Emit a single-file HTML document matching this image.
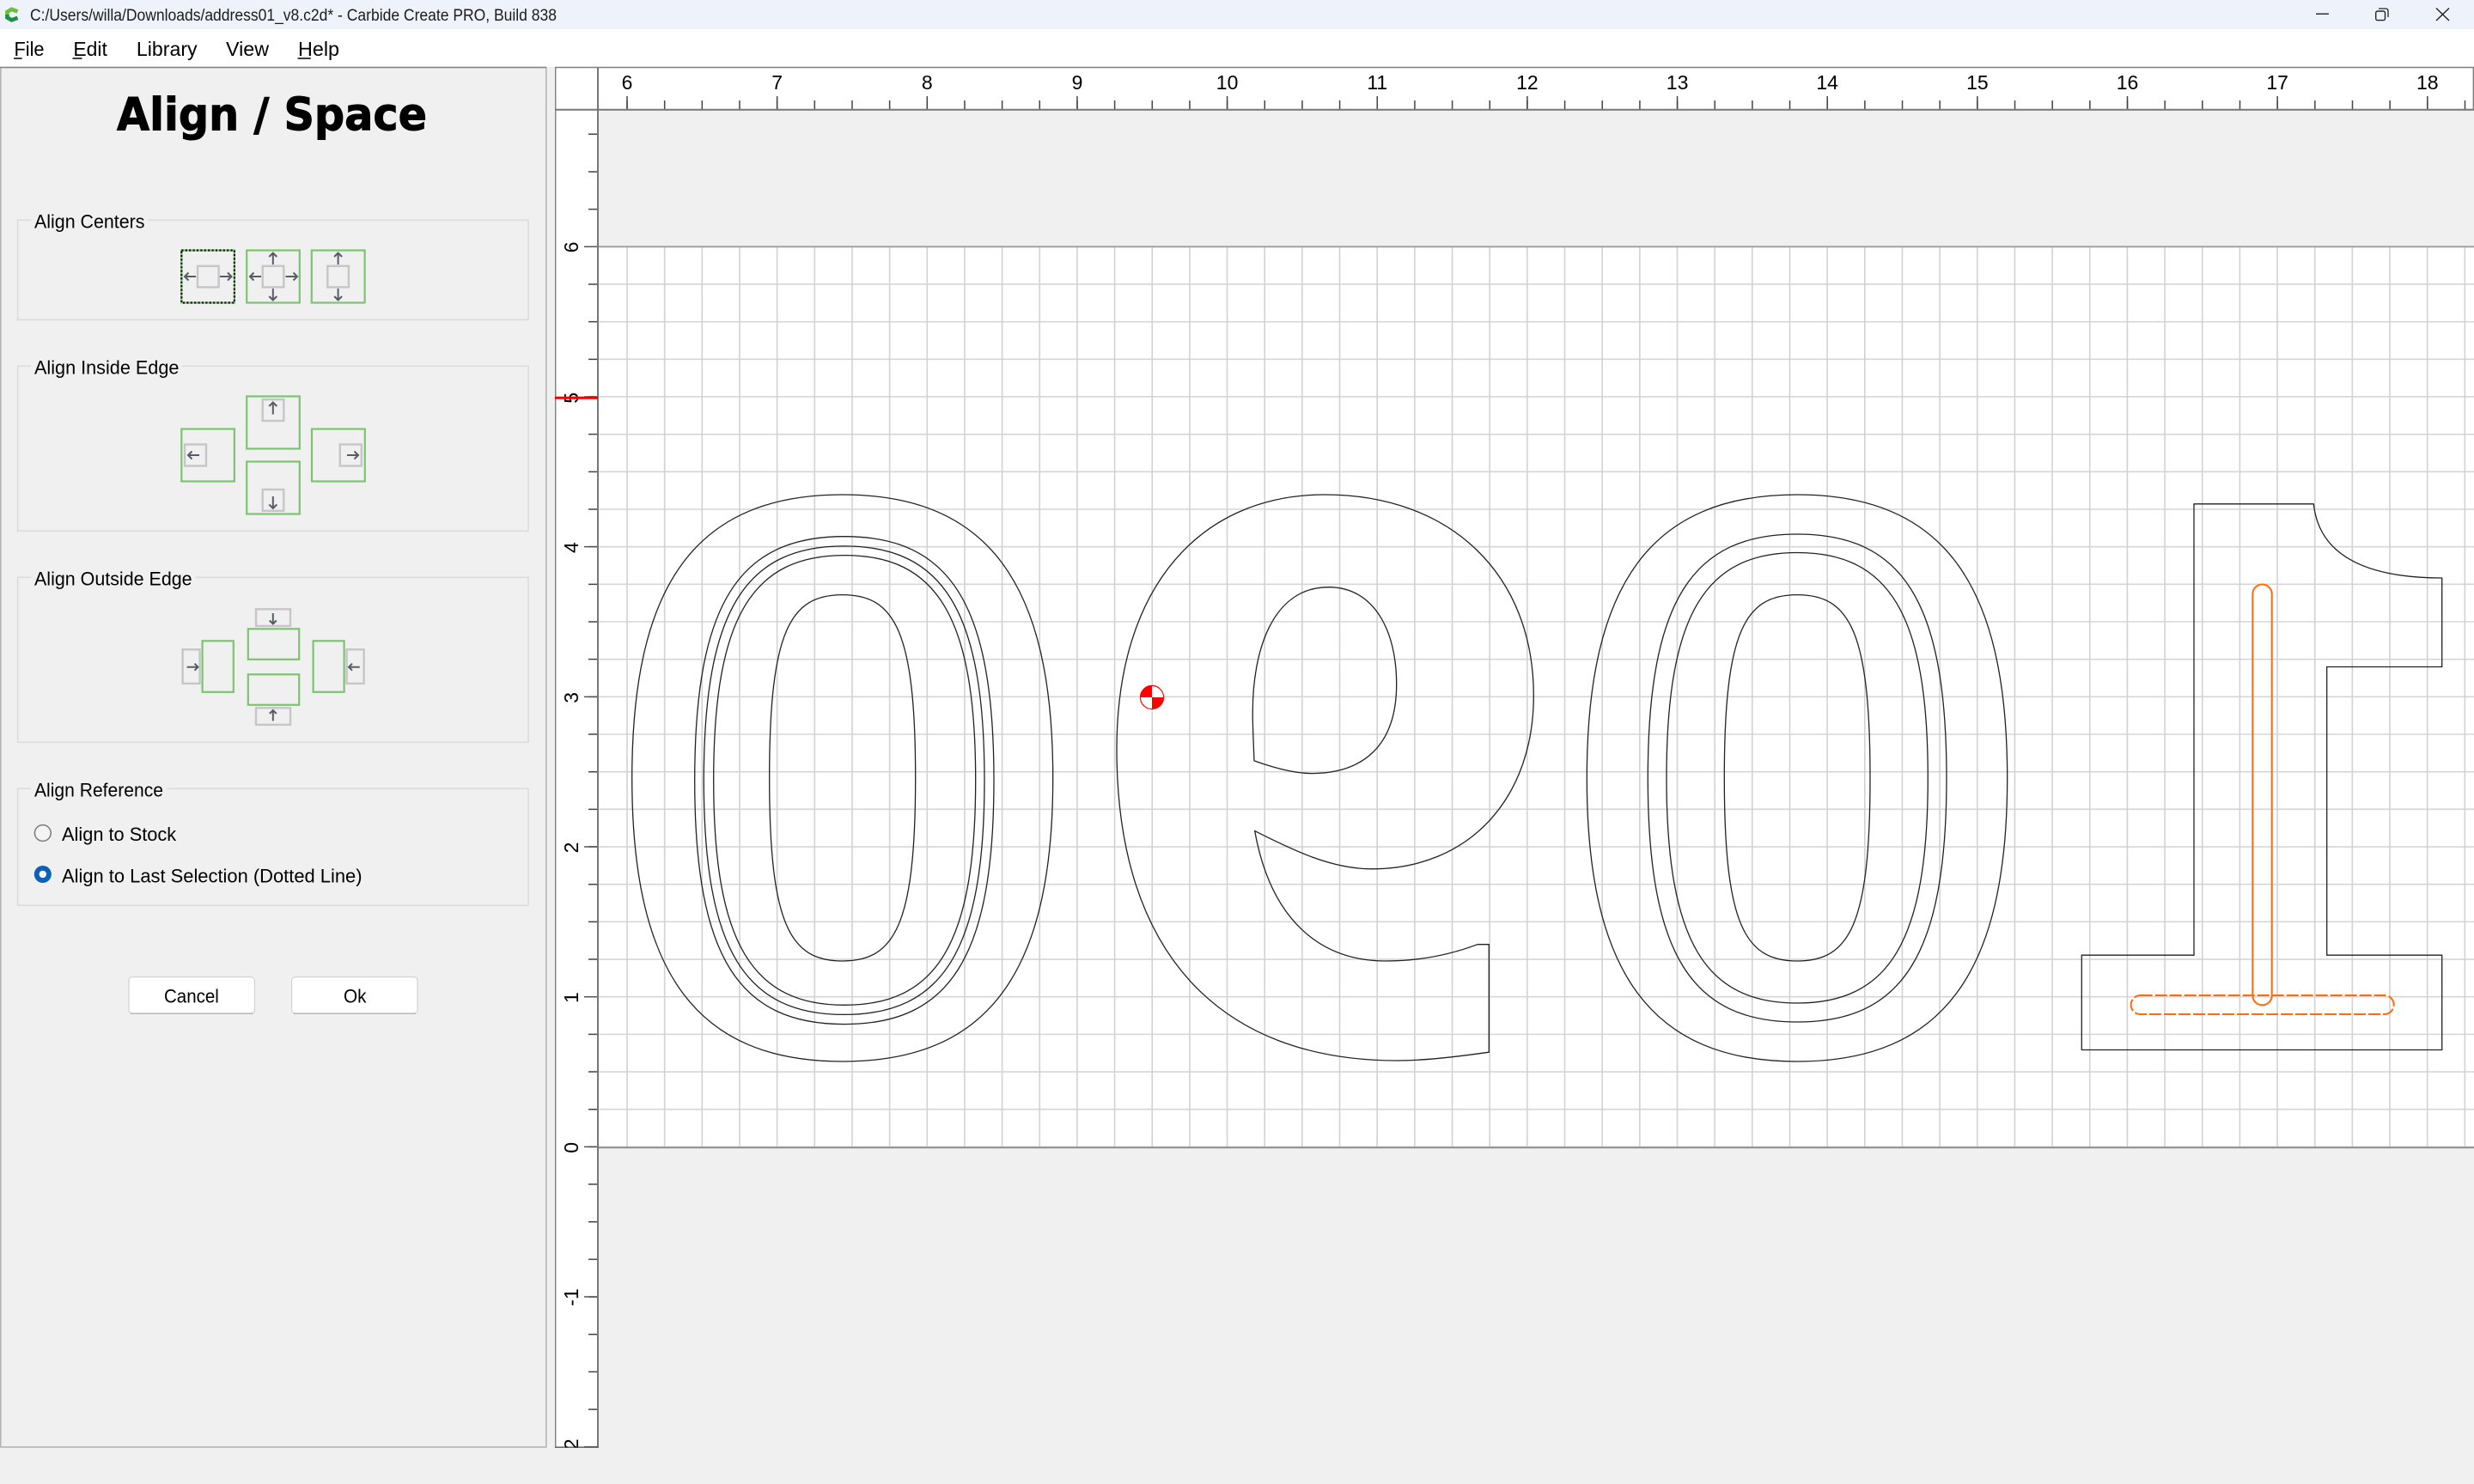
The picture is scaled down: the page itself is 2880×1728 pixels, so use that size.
<!DOCTYPE html>
<html><head><meta charset="utf-8"><title>Carbide Create PRO</title>
<style>
html,body{margin:0;padding:0;width:2880px;height:1728px;overflow:hidden;background:#f0f0f0}
svg{display:block}
text{font-family:"Liberation Sans",sans-serif;fill:#000}
.lb{font-size:22px}
.rn{font-size:23px;text-anchor:middle}
.g{fill:none;stroke:#7cc46f;stroke-width:2.2}
.s{fill:none;stroke:#c6c6c6;stroke-width:2.4}
.a{fill:none;stroke:#545d66;stroke-width:2}
.c{fill:none;stroke:#222;stroke-width:1.3}
.o{fill:none;stroke:#ff6a0a;stroke-width:2}
</style></head><body>
<svg xmlns="http://www.w3.org/2000/svg" width="2880" height="1728" viewBox="0 0 2880 1728">
<defs><clipPath id="vr"><rect x="646" y="128" width="50" height="1557.5"/></clipPath></defs>
<rect width="2880" height="1728" fill="#f0f0f0"/>
<!-- title bar -->
<rect width="2880" height="34" fill="#eef2fa"/>
<path d="M20.5 13.4L13.5 10.8L8.4 13.8V17.5" fill="none" stroke="#6cbf3c" stroke-width="4.6"/>
<path d="M8.4 17V20.4L13.5 23.4L20.5 20.8" fill="none" stroke="#1f8f45" stroke-width="4.6"/>
<text x="35" y="24" font-size="19" textLength="613" lengthAdjust="spacingAndGlyphs" style="fill:#1c1c1c">C:/Users/willa/Downloads/address01_v8.c2d* - Carbide Create PRO, Build 838</text>
<path d="M2696 16.2H2711" stroke="#222" stroke-width="1.4" fill="none"/>
<rect x="2765.7" y="13" width="10.8" height="10.6" rx="2" fill="none" stroke="#222" stroke-width="1.4"/>
<path d="M2769 10H2777Q2780 10 2780 13V20" fill="none" stroke="#222" stroke-width="1.3"/>
<path d="M2836 9.5L2851 24M2851 9.5L2836 24" stroke="#222" stroke-width="1.4" fill="none"/>
<!-- menu bar -->
<rect y="34" width="2880" height="44" fill="#fff"/>
<g font-size="23.5">
<text x="16.5" y="65" textLength="35" lengthAdjust="spacingAndGlyphs">File</text>
<text x="85.4" y="65" textLength="39.5" lengthAdjust="spacingAndGlyphs">Edit</text>
<text x="158.9" y="65" textLength="70.7" lengthAdjust="spacingAndGlyphs">Library</text>
<text x="263" y="65" textLength="50" lengthAdjust="spacingAndGlyphs">View</text>
<text x="347" y="65" textLength="48" lengthAdjust="spacingAndGlyphs">Help</text>
</g>
<path d="M16 68H25.7M84.5 68H95.5M346.6 68H361.8" stroke="#000" stroke-width="1.6" fill="none"/>
<!-- left panel -->
<rect x="0.8" y="78.5" width="635" height="1606.5" fill="#f0f0f0" stroke="#adadad" stroke-width="1.4"/>
<path d="M0 78.5H636" stroke="#858585" stroke-width="1.4"/>
<text x="136" y="151.7" font-size="53" font-weight="bold" textLength="361" lengthAdjust="spacingAndGlyphs" style="font-family:'DejaVu Sans','Liberation Sans',sans-serif;stroke:#000;stroke-width:1">Align / Space</text>
<!-- group boxes -->
<g fill="none" stroke="#dbdbdb" stroke-width="1.5">
<rect x="20.6" y="256.3" width="594.4" height="116"/>
<rect x="20.6" y="426.3" width="594.4" height="192"/>
<rect x="20.6" y="672.3" width="594.4" height="192"/>
<rect x="20.6" y="918.3" width="594.4" height="136"/>
</g>
<g fill="#f0f0f0">
<rect x="36" y="250" width="136" height="12"/>
<rect x="36" y="420" width="176" height="12"/>
<rect x="36" y="666" width="192" height="12"/>
<rect x="36" y="912" width="158" height="12"/>
</g>
<text class="lb" x="40" y="265.7" textLength="128.5" lengthAdjust="spacingAndGlyphs">Align Centers</text>
<text class="lb" x="40" y="435.7" textLength="168.4" lengthAdjust="spacingAndGlyphs">Align Inside Edge</text>
<text class="lb" x="40" y="681.7" textLength="183.6" lengthAdjust="spacingAndGlyphs">Align Outside Edge</text>
<text class="lb" x="40" y="927.7" textLength="150" lengthAdjust="spacingAndGlyphs">Align Reference</text>
<!-- centers icons -->
<rect class="g" x="211.3" y="291.5" width="61.6" height="61"/>
<rect x="211.3" y="291.5" width="61.6" height="61" fill="none" stroke="#111" stroke-width="2.2" stroke-dasharray="2.2 2.2"/>
<rect class="s" x="230" y="309.8" width="24.6" height="24.6"/>
<path class="a" d="M228 322H215M219.5 317.5L215 322L219.5 326.5M256 322H269.5M265 317.5L269.5 322L265 326.5"/>
<rect class="g" x="287.2" y="291.5" width="61.6" height="61"/>
<rect class="s" x="305.7" y="309.8" width="24.6" height="24.6"/>
<path class="a" d="M304 322H291M295.5 317.5L291 322L295.5 326.5M332.5 322H346M341.5 317.5L346 322L341.5 326.5M317.8 308V294.5M313.3 299L317.8 294.5L322.3 299M317.8 336V349.5M313.3 345L317.8 349.5L322.3 345"/>
<rect class="g" x="362.8" y="291.5" width="61.8" height="61"/>
<rect class="s" x="381.3" y="309.8" width="24.6" height="24.6"/>
<path class="a" d="M393.6 308V294.5M389.1 299L393.6 294.5L398.1 299M393.6 336V349.5M389.1 345L393.6 349.5L398.1 345"/>
<!-- inside edge -->
<rect class="g" x="211.3" y="499.5" width="61.6" height="61"/>
<rect class="s" x="215" y="517.5" width="25" height="25"/>
<path class="a" d="M232 530H219M223.5 525.5L219 530L223.5 534.5"/>
<rect class="g" x="287.2" y="461.5" width="61.6" height="61"/>
<rect class="s" x="305.7" y="465.2" width="24.6" height="24.8"/>
<path class="a" d="M317.8 482.5V468.5M313.3 473L317.8 468.5L322.3 473"/>
<rect class="g" x="287.2" y="537.5" width="61.6" height="61"/>
<rect class="s" x="305.7" y="570" width="24.6" height="24.8"/>
<path class="a" d="M317.8 578V592M313.3 587.5L317.8 592L322.3 587.5"/>
<rect class="g" x="363" y="499.5" width="61.8" height="61"/>
<rect class="s" x="395.8" y="517.5" width="25" height="25"/>
<path class="a" d="M404 530H417M412.5 525.5L417 530L412.5 534.5"/>
<!-- outside edge -->
<rect class="s" x="298" y="709.3" width="40" height="19.6"/>
<path class="a" d="M317.8 714V726.5M313.8 722.5L317.8 726.5L321.8 722.5"/>
<rect class="g" x="288.8" y="732.3" width="59.4" height="35.5"/>
<rect class="g" x="288.8" y="785.3" width="59.4" height="35.5"/>
<rect class="s" x="298" y="824.3" width="40" height="19.6"/>
<path class="a" d="M317.8 839.5V827M313.8 831L317.8 827L321.8 831"/>
<rect class="s" x="212.6" y="756.3" width="20" height="39.6"/>
<path class="a" d="M217.6 776.7H230.5M226.5 772.7L230.5 776.7L226.5 780.7"/>
<rect class="g" x="235.6" y="746.3" width="36.2" height="59.5"/>
<rect class="g" x="364.6" y="746.3" width="36" height="59.5"/>
<rect class="s" x="403.6" y="756.3" width="20" height="39.6"/>
<path class="a" d="M418.7 776.7H406M410 772.7L406 776.7L410 780.7"/>
<!-- radios -->
<circle cx="49.8" cy="970" r="9.4" fill="#f4f4f4" stroke="#7a7a7a" stroke-width="1.5"/>
<circle cx="49.8" cy="1018" r="10" fill="#0a62b8"/>
<circle cx="49.8" cy="1018" r="4.2" fill="#fff"/>
<text class="lb" x="72" y="979" textLength="133.2" lengthAdjust="spacingAndGlyphs">Align to Stock</text>
<text class="lb" x="72" y="1027.3" textLength="349.5" lengthAdjust="spacingAndGlyphs">Align to Last Selection (Dotted Line)</text>
<!-- buttons -->
<rect x="150" y="1137.6" width="146.4" height="42.4" rx="4" fill="#fff" stroke="#d3d3d3" stroke-width="1.2"/>
<path d="M152 1180.2H294.5" stroke="#b4b4b4" stroke-width="1.4"/>
<rect x="339.6" y="1137.6" width="146.4" height="42.4" rx="4" fill="#fff" stroke="#d3d3d3" stroke-width="1.2"/>
<path d="M341.6 1180.2H484" stroke="#b4b4b4" stroke-width="1.4"/>
<text class="lb" x="191" y="1167.5" textLength="63.8" lengthAdjust="spacingAndGlyphs">Cancel</text>
<text class="lb" x="400" y="1167.5" textLength="26.5" lengthAdjust="spacingAndGlyphs">Ok</text>
<!-- rulers -->
<rect x="646" y="78" width="2234" height="50" fill="#fff"/>
<rect x="646" y="78" width="50" height="1607.5" fill="#fff"/>
<!-- work area -->
<rect x="696" y="287.3" width="2184" height="1049" fill="#fff"/>
<line x1="1788" x2="1788" y1="286.5" y2="1337" stroke="#d6d6d6" stroke-width="2184" stroke-dasharray="1.6 42.07"/>
<line x1="729.2" x2="2880" y1="812" y2="812" stroke="#d2d2d2" stroke-width="1049" stroke-dasharray="1.6 42.06"/>
<path d="M696 287.3H2880" stroke="#a2a2a2" stroke-width="2" fill="none"/>
<path d="M696 1336.3H2880" stroke="#8f8f8f" stroke-width="2" fill="none"/>
<!-- ticks -->
<line x1="729.25" x2="2880" y1="122" y2="122" stroke="#444" stroke-width="10" stroke-dasharray="1.5 42.163"/>
<line x1="729.25" x2="2880" y1="119.5" y2="119.5" stroke="#444" stroke-width="15" stroke-dasharray="1.5 173.15"/>
<line x1="690" x2="690" y1="155.55" y2="1686" stroke="#444" stroke-width="10" stroke-dasharray="1.5 42.17"/>
<line x1="688" x2="688" y1="286.55" y2="1686" stroke="#555" stroke-width="16" stroke-dasharray="1.5 173.18"/>
<!-- ruler frame -->
<path d="M646.7 1685.5V78.5H2879.3V128" fill="none" stroke="#7f7f7f" stroke-width="1.4"/>
<path d="M646 127.7H2880M696 78V1685.5" fill="none" stroke="#777" stroke-width="2"/>
<path d="M646 1685.2H697" fill="none" stroke="#555" stroke-width="1.4"/>
<!-- ruler numbers -->
<g>
<text class="rn" x="730" y="103.8">6</text>
<text class="rn" x="904.7" y="103.8">7</text>
<text class="rn" x="1079.3" y="103.8">8</text>
<text class="rn" x="1254" y="103.8">9</text>
<text class="rn" x="1428.6" y="103.8">10</text>
<text class="rn" x="1603.3" y="103.8">11</text>
<text class="rn" x="1777.9" y="103.8">12</text>
<text class="rn" x="1952.6" y="103.8">13</text>
<text class="rn" x="2127.2" y="103.8">14</text>
<text class="rn" x="2301.9" y="103.8">15</text>
<text class="rn" x="2476.5" y="103.8">16</text>
<text class="rn" x="2651.2" y="103.8">17</text>
<text class="rn" x="2825.8" y="103.8">18</text>
</g>
<g clip-path="url(#vr)">
<text class="rn" transform="translate(672.8,287.8) rotate(-90)">6</text>
<text class="rn" transform="translate(672.8,463.3) rotate(-90)">5</text>
<text class="rn" transform="translate(672.8,637.6) rotate(-90)">4</text>
<text class="rn" transform="translate(672.8,812.3) rotate(-90)">3</text>
<text class="rn" transform="translate(672.8,987) rotate(-90)">2</text>
<text class="rn" transform="translate(672.8,1161.6) rotate(-90)">1</text>
<text class="rn" transform="translate(672.8,1336.3) rotate(-90)">0</text>
<text class="rn" transform="translate(672.8,1510.6) rotate(-90)">-1</text>
<text class="rn" transform="translate(672.8,1685.6) rotate(-90)">-2</text>
</g>
<path d="M646 463.3H696" stroke="#f00000" stroke-width="3" fill="none"/>
<!-- shapes: zero 1 -->
<path class="c" d="M735.7 906C735.7 678.3 811.7 576 980.7 576C1149.7 576 1225.7 678.3 1225.7 906C1225.7 1133.7 1149.7 1236 980.7 1236C811.7 1236 735.7 1133.7 735.7 906Z"/>
<path class="c" d="M808.7 908.65C808.7 701.35 860.85 624.7 982.85 624.7C1104.85 624.7 1157 701.35 1157 908.65C1157 1115.95 1104.85 1192.6 982.85 1192.6C860.85 1192.6 808.7 1115.95 808.7 908.65Z"/>
<path class="c" d="M819.3 908.65C819.3 709.55 868.35 635.9 982.65 635.9C1096.95 635.9 1146 709.55 1146 908.65C1146 1107.75 1096.95 1181.4 982.65 1181.4C868.35 1181.4 819.3 1107.75 819.3 908.65Z"/>
<path class="c" d="M830.7 908.45C830.7 717.25 876.45 646.6 983.2 646.6C1089.95 646.6 1135.7 717.25 1135.7 908.45C1135.7 1099.65 1089.95 1170.3 983.2 1170.3C876.45 1170.3 830.7 1099.65 830.7 908.45Z"/>
<path class="c" d="M895.7 905.8C895.7 735.2 919.5 692.6 980.7 692.6C1041.9 692.6 1065.7 735.2 1065.7 905.8C1065.7 1076.4 1041.9 1119 980.7 1119C919.5 1119 895.7 1076.4 895.7 905.8Z"/>
<!-- nine -->
<path class="c" d="M1733.3 1225.2C1700 1230 1660 1235 1626.7 1235C1420 1235 1300 1110 1300 872.5C1300 680 1400 576 1542 576C1690 576 1785.3 670 1785.3 810C1785.3 930 1710 1011.8 1596.7 1011.8C1550 1011.8 1505 990 1460.7 967.6C1480 1075 1540 1119 1613.3 1119C1655 1119 1690 1111 1720 1099.7L1733.3 1099.7Z"/>
<path class="c" d="M1460 885.9C1459 860 1458 840 1458.3 830C1458 760 1480 683.7 1546.7 683.7C1600 683.7 1625.7 735 1625.7 796.6C1625.7 870 1585 900.6 1526.7 900.6C1505 900.6 1480 893 1460 885.9Z"/>
<!-- origin marker -->
<circle cx="1341" cy="812" r="13.6" fill="#fff" stroke="#f00" stroke-width="1.2"/>
<path d="M1341 812V798.4A13.6 13.6 0 0 0 1327.4 812ZM1341 812V825.6A13.6 13.6 0 0 0 1354.6 812Z" fill="#f00"/>
<!-- zero 2 -->
<path class="c" d="M1847.3 906C1847.3 678.3 1923 576 2092 576C2261 576 2336.7 678.3 2336.7 906C2336.7 1133.7 2261 1236 2092 1236C1923 1236 1847.3 1133.7 1847.3 906Z"/>
<path class="c" d="M1918.3 906C1918.3 698.7 1970.45 622 2092.15 622C2213.85 622 2266 698.7 2266 906C2266 1113.3 2213.85 1190 2092.15 1190C1970.45 1190 1918.3 1113.3 1918.3 906Z"/>
<path class="c" d="M1940 905.75C1940 714.35 1985.65 643.5 2092.15 643.5C2198.65 643.5 2244.3 714.35 2244.3 905.75C2244.3 1097.15 2198.65 1168 2092.15 1168C1985.65 1168 1940 1097.15 1940 905.75Z"/>
<path class="c" d="M2007.3 905.8C2007.3 735.2 2031.05 692.6 2092.15 692.6C2153.25 692.6 2177 735.2 2177 905.8C2177 1076.4 2153.25 1119 2092.15 1119C2031.05 1119 2007.3 1076.4 2007.3 905.8Z"/>
<!-- one -->
<path class="c" d="M2554 586.8H2693.3C2700 650 2760 673 2842.7 673V776.5H2708.7V1112.2H2842.7V1222.5H2423.3V1112.2H2554Z"/>
<rect class="o" x="2622.3" y="680.5" width="22.4" height="489.8" rx="11.2"/>
<rect class="o" x="2480.7" y="1159" width="306" height="22" rx="11" stroke-dasharray="14 3"/>
</svg>
</body></html>
